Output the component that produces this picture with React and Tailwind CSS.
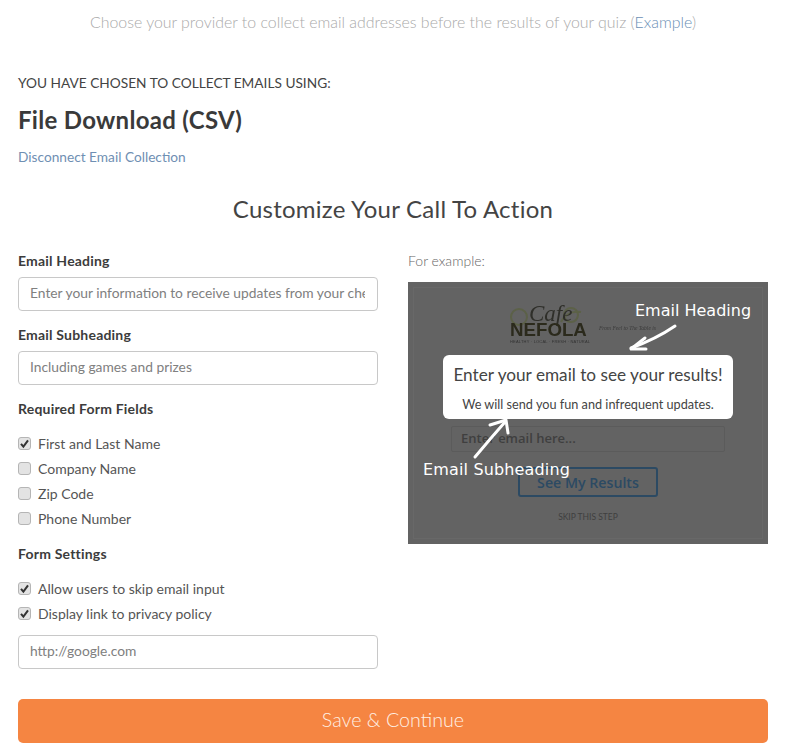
// App.jsx
import React from 'react';

const fontStack = "font-['Lato','Open_Sans',sans-serif]";

const Check = ({ checked, label }) => (
  <label className="flex items-center h-[25px] text-[14px] text-[#555]">
    <span className="relative w-[13px] h-[13px] mr-[7px] rounded-[3px] border border-[#b5b5b5] bg-[#e3e3e3] shrink-0">
      {checked && (
        <svg viewBox="0 0 13 13" className="absolute -left-px -top-px w-[13px] h-[13px]">
          <path d="M3 6.8 L5.4 9.6 L10 3.4" fill="none" stroke="#333" strokeWidth="2" />
        </svg>
      )}
    </span>
    {label}
  </label>
);

const TextField = ({ value }) => (
  <input
    readOnly
    value={value}
    className="block w-full h-[34px] pl-[11px] pr-3 pb-[3px] border border-[#c8c8c8] rounded-[4px] bg-white text-[13.8px] text-[#808080] outline-none"
  />
);

const SectionLabel = ({ children }) => (
  <h4 className="text-[14px] leading-5 tracking-[0.2px] font-bold text-[#3c3c3c]">{children}</h4>
);

const Preview = () => (
  <div className="relative h-[262px] bg-[#636363] overflow-hidden">
    <div className="absolute inset-[5px] border border-[#686868]" />
    <div className="relative flex flex-col items-center h-full px-[36px] pt-[19px]">
      {/* blurred logo behind the dimmed overlay */}
      <div className="relative w-[290px] h-[54px] blur-[0.4px]">
        <svg viewBox="0 0 90 30" className="absolute left-[62px] top-[1px] w-[90px] h-[30px]">
          <g fill="none" stroke="#5c6148" strokeWidth="2">
            <circle cx="14" cy="15" r="8" />
            <circle cx="66" cy="13" r="7" />
            <path d="M56 20 Q62 8 76 10" />
          </g>
        </svg>
        <span className="absolute left-[86px] top-[1px] font-['Liberation_Serif',serif] italic text-[23px] leading-6 text-[#2f2f2a]">
          Cafe
        </span>
        <span className="absolute left-[67px] top-[19px] font-['Liberation_Sans',sans-serif] font-bold text-[18.7px] leading-5 text-[#2b2a1c]">
          NEFOLA
        </span>
        <span className="absolute left-[67px] top-[38px] font-['Liberation_Sans',sans-serif] text-[4px] leading-[5px] tracking-[0.2px] text-[#333]">
          HEALTHY · LOCAL · FRESH · NATURAL
        </span>
        <span className="absolute left-[156px] top-[24px] font-['Liberation_Serif',serif] italic text-[5.5px] leading-[6px] text-[#3a3a3a]">
          From Feel to The Table is
        </span>
      </div>
      <div className="w-[290px] h-[64px] rounded-[6px] bg-white text-center">
        <div className="mt-[8px] text-[17.2px] leading-6 text-[#444]">Enter your email to see your results!</div>
        <div className="mt-[9px] text-[12.7px] leading-4 text-[#444]">We will send you fun and infrequent updates.</div>
      </div>
      <div className="w-[274px] h-[26px] mt-[7px] px-[9px] flex items-center rounded-[2px] border border-[#5b5b5b] font-['Open_Sans',sans-serif] font-semibold text-[13px] text-[#3f3f3f]">
        Enter email here...
      </div>
      <div className="w-[140px] h-[30px] mt-[15px] pt-[1px] flex items-center justify-center rounded-[3px] border-2 border-[#2c4a63] font-['Open_Sans',sans-serif] font-semibold text-[14.2px] text-[#2c4a63]">
        See My Results
      </div>
      <div className="mt-[14px] text-[8.5px] leading-3 text-[#3f3f3f]">SKIP THIS STEP</div>
    </div>

    {/* hand-written annotations over the picture */}
    <span className="absolute left-[227px] top-[19px] font-['DejaVu_Sans',sans-serif] text-[16px] leading-5 text-white">
      Email Heading
    </span>
    <span className="absolute left-[15px] top-[178px] font-['DejaVu_Sans',sans-serif] text-[16px] leading-5 tracking-[0.15px] text-white">
      Email Subheading
    </span>
    <svg viewBox="0 0 360 262" className="absolute inset-0 w-full h-full pointer-events-none">
      <g fill="none" stroke="#fff" strokeWidth="3" strokeLinecap="round" strokeLinejoin="round">
        <path d="M267 44 Q248 57 223 66" />
        <path d="M237 56 L223 67 L238 67" />
        <path d="M67 175 Q82 157 97 140" />
        <path d="M82 143 L98 138 L100 151" />
      </g>
    </svg>
  </div>
);

const App = () => {
  return (
    <div className={`w-[796px] h-[754px] bg-white overflow-hidden ${fontStack}`}>
      <div className="pl-[18px] pr-[28px]">
        {/* Intro */}
        <p className="pt-[11px] text-center text-[15.9px] leading-[22px] font-light text-[#aaa]">
          Choose your provider to collect email addresses before the results of your quiz (
          <a className="text-[#6b8fb5]">Example</a>)
        </p>

        <p className="mt-[40px] text-[13.7px] leading-5 text-[#444]">YOU HAVE CHOSEN TO COLLECT EMAILS USING:</p>
        <h2 className="mt-[12px] text-[24px] leading-[30px] tracking-[0.3px] font-bold text-[#3a3a3a]">File Download (CSV)</h2>
        <a className="block mt-[12px] text-[13.7px] leading-5 text-[#6f8fb3]">Disconnect Email Collection</a>

        <h3 className="mt-[26px] text-center text-[24px] leading-[32px] tracking-[0.25px] text-[#444]">Customize Your Call To Action</h3>

        {/* Form and example */}
        <div className="grid grid-cols-[360px_360px] gap-x-[30px] mt-[26px]">
          <div>
            <SectionLabel>Email Heading</SectionLabel>
            <div className="mt-[6px]">
              <TextField value="Enter your information to receive updates from your che" />
            </div>
            <div className="mt-[14px]">
              <SectionLabel>Email Subheading</SectionLabel>
            </div>
            <div className="mt-[6px]">
              <TextField value="Including games and prizes" />
            </div>
            <div className="mt-[14px]">
              <SectionLabel>Required Form Fields</SectionLabel>
            </div>
            <div className="mt-[12px]">
              <Check checked label="First and Last Name" />
              <Check label="Company Name" />
              <Check label="Zip Code" />
              <Check label="Phone Number" />
            </div>
            <div className="mt-[13px]">
              <SectionLabel>Form Settings</SectionLabel>
            </div>
            <div className="mt-[12px]">
              <Check checked label="Allow users to skip email input" />
              <Check checked label="Display link to privacy policy" />
            </div>
            <div className="mt-[9px]">
              <TextField value="http://google.com" />
            </div>
          </div>
          <div>
            <p className="text-[14px] leading-5 font-light text-[#666]">For example:</p>
            <div className="mt-[11px]">
              <Preview />
            </div>
          </div>
        </div>

        <button className="block w-full h-[44px] mt-[30px] pb-[2px] rounded-[5px] bg-[#f58542] text-[19.7px] font-light text-[#fff0e5]">
          Save &amp; Continue
        </button>
      </div>
    </div>
  );
};

export default App;
